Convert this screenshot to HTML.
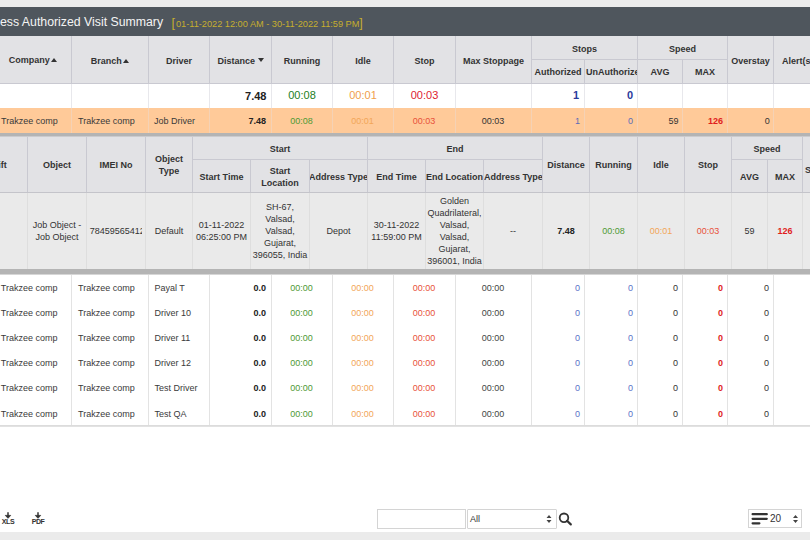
<!DOCTYPE html>
<html><head><meta charset="utf-8"><style>
html,body{margin:0;padding:0;}
body{width:810px;height:540px;overflow:hidden;position:relative;background:#fff;font-family:"Liberation Sans",sans-serif;}
body>div,body>svg{position:absolute;}
</style></head><body>
<div style="left:0px;top:0px;width:810px;height:7px;background:#ececec"></div>
<div style="left:0px;top:7px;width:810px;height:29px;background:#4f565d"></div>
<div style="left:0px;top:14.4px;font-size:12.3px;color:#f4f4f4;white-space:nowrap;line-height:16px">ess Authorized Visit Summary</div>
<div style="left:171.5px;top:15.3px;font-size:12.5px;color:#c6ae2e;white-space:nowrap;line-height:16px">[<span style="font-size:9.2px;vertical-align:0.6px;margin-left:1px">01-11-2022 12:00 AM - 30-11-2022 11:59 PM</span>]</div>
<div style="left:0px;top:36px;width:810px;height:47px;background:#e2e2e5"></div>
<div style="left:71px;top:36px;width:1px;height:47px;background:#c9c9d1"></div>
<div style="left:148px;top:36px;width:1px;height:47px;background:#c9c9d1"></div>
<div style="left:209px;top:36px;width:1px;height:47px;background:#c9c9d1"></div>
<div style="left:271px;top:36px;width:1px;height:47px;background:#c9c9d1"></div>
<div style="left:332px;top:36px;width:1px;height:47px;background:#c9c9d1"></div>
<div style="left:393px;top:36px;width:1px;height:47px;background:#c9c9d1"></div>
<div style="left:455px;top:36px;width:1px;height:47px;background:#c9c9d1"></div>
<div style="left:531px;top:36px;width:1px;height:47px;background:#c9c9d1"></div>
<div style="left:584px;top:59px;width:1px;height:24px;background:#c9c9d1"></div>
<div style="left:637px;top:36px;width:1px;height:47px;background:#c9c9d1"></div>
<div style="left:682px;top:59px;width:1px;height:24px;background:#c9c9d1"></div>
<div style="left:727px;top:36px;width:1px;height:47px;background:#c9c9d1"></div>
<div style="left:773px;top:36px;width:1px;height:47px;background:#c9c9d1"></div>
<div style="left:531px;top:59px;width:196px;height:1px;background:#c9c9d1"></div>
<div style="left:0px;top:83px;width:810px;height:1px;background:#c9c9d1"></div>
<div style="left:8.7px;top:36.8px;height:47px;display:flex;align-items:center;font-size:9px;font-weight:bold;color:#333">Company<span style="display:inline-block;width:0;height:0;border-left:3px solid transparent;border-right:3px solid transparent;border-bottom:4px solid #333;margin-left:1.5px;vertical-align:1px"></span></div>
<div style="left:72px;top:37px;width:76px;height:47px;display:flex;align-items:center;justify-content:center;text-align:center;font-size:9px;color:#333;overflow:hidden;font-weight:bold;box-sizing:border-box;white-space:nowrap;"><span>Branch<span style="display:inline-block;width:0;height:0;border-left:3px solid transparent;border-right:3px solid transparent;border-bottom:4px solid #333;margin-left:1.5px;vertical-align:1px"></span></span></div>
<div style="left:149px;top:37px;width:60px;height:47px;display:flex;align-items:center;justify-content:center;text-align:center;font-size:9px;color:#333;overflow:hidden;font-weight:bold;box-sizing:border-box;white-space:nowrap;"><span>Driver</span></div>
<div style="left:210px;top:37px;width:61px;height:47px;display:flex;align-items:center;justify-content:center;text-align:center;font-size:9px;color:#333;overflow:hidden;font-weight:bold;box-sizing:border-box;white-space:nowrap;"><span>Distance<span style="display:inline-block;width:0;height:0;border-left:3px solid transparent;border-right:3px solid transparent;border-top:4px solid #333;margin-left:2.5px;vertical-align:1.5px"></span></span></div>
<div style="left:272px;top:37px;width:60px;height:47px;display:flex;align-items:center;justify-content:center;text-align:center;font-size:9px;color:#333;overflow:hidden;font-weight:bold;box-sizing:border-box;white-space:nowrap;"><span>Running</span></div>
<div style="left:333px;top:37px;width:60px;height:47px;display:flex;align-items:center;justify-content:center;text-align:center;font-size:9px;color:#333;overflow:hidden;font-weight:bold;box-sizing:border-box;white-space:nowrap;"><span>Idle</span></div>
<div style="left:394px;top:37px;width:61px;height:47px;display:flex;align-items:center;justify-content:center;text-align:center;font-size:9px;color:#333;overflow:hidden;font-weight:bold;box-sizing:border-box;white-space:nowrap;"><span>Stop</span></div>
<div style="left:456px;top:37px;width:75px;height:47px;display:flex;align-items:center;justify-content:center;text-align:center;font-size:9px;color:#333;overflow:hidden;font-weight:bold;box-sizing:border-box;white-space:nowrap;"><span>Max Stoppage</span></div>
<div style="left:532px;top:37px;width:105px;height:23px;display:flex;align-items:center;justify-content:center;text-align:center;font-size:9px;color:#333;overflow:hidden;font-weight:bold;box-sizing:border-box;white-space:nowrap;"><span>Stops</span></div>
<div style="left:638px;top:37px;width:89px;height:23px;display:flex;align-items:center;justify-content:center;text-align:center;font-size:9px;color:#333;overflow:hidden;font-weight:bold;box-sizing:border-box;white-space:nowrap;"><span>Speed</span></div>
<div style="left:532px;top:60px;width:52px;height:24px;display:flex;align-items:center;justify-content:center;text-align:center;font-size:9px;color:#333;overflow:hidden;font-weight:bold;box-sizing:border-box;white-space:nowrap;"><span>Authorized</span></div>
<div style="left:585px;top:59.8px;width:52px;height:24.0px;display:flex;align-items:center;justify-content:flex-start;text-align:left;font-size:9px;color:#333;overflow:hidden;padding-left:1px;font-weight:bold;box-sizing:border-box;white-space:nowrap;"><span>UnAuthorize</span></div>
<div style="left:638px;top:60px;width:44px;height:24px;display:flex;align-items:center;justify-content:center;text-align:center;font-size:9px;color:#333;overflow:hidden;font-weight:bold;box-sizing:border-box;white-space:nowrap;"><span>AVG</span></div>
<div style="left:683px;top:60px;width:44px;height:24px;display:flex;align-items:center;justify-content:center;text-align:center;font-size:9px;color:#333;overflow:hidden;font-weight:bold;box-sizing:border-box;white-space:nowrap;"><span>MAX</span></div>
<div style="left:728px;top:37px;width:45px;height:47px;display:flex;align-items:center;justify-content:center;text-align:center;font-size:9px;color:#333;overflow:hidden;font-weight:bold;box-sizing:border-box;white-space:nowrap;"><span>Overstay</span></div>
<div style="left:774px;top:37px;width:36px;height:47px;display:flex;align-items:center;justify-content:flex-start;text-align:left;font-size:9px;color:#333;overflow:hidden;padding-left:8px;font-weight:bold;box-sizing:border-box;white-space:nowrap;"><span>Alert(s)</span></div>
<div style="left:0px;top:84px;width:810px;height:24px;background:#ffffff"></div>
<div style="left:71px;top:84px;width:1px;height:24px;background:#e8e8ec"></div>
<div style="left:148px;top:84px;width:1px;height:24px;background:#e8e8ec"></div>
<div style="left:209px;top:84px;width:1px;height:24px;background:#e8e8ec"></div>
<div style="left:271px;top:84px;width:1px;height:24px;background:#e8e8ec"></div>
<div style="left:332px;top:84px;width:1px;height:24px;background:#e8e8ec"></div>
<div style="left:393px;top:84px;width:1px;height:24px;background:#e8e8ec"></div>
<div style="left:455px;top:84px;width:1px;height:24px;background:#e8e8ec"></div>
<div style="left:531px;top:84px;width:1px;height:24px;background:#e8e8ec"></div>
<div style="left:584px;top:84px;width:1px;height:24px;background:#e8e8ec"></div>
<div style="left:637px;top:84px;width:1px;height:24px;background:#e8e8ec"></div>
<div style="left:682px;top:84px;width:1px;height:24px;background:#e8e8ec"></div>
<div style="left:727px;top:84px;width:1px;height:24px;background:#e8e8ec"></div>
<div style="left:773px;top:84px;width:1px;height:24px;background:#e8e8ec"></div>
<div style="left:209px;top:83.5px;width:62px;height:24.0px;display:flex;align-items:center;justify-content:flex-end;text-align:right;font-size:11px;color:#222;overflow:hidden;padding-right:4.5px;font-weight:bold;box-sizing:border-box;white-space:nowrap;"><span>7.48</span></div>
<div style="left:272px;top:83px;width:60px;height:24px;display:flex;align-items:center;justify-content:center;text-align:center;font-size:11px;color:#1c801c;overflow:hidden;box-sizing:border-box;white-space:nowrap;"><span>00:08</span></div>
<div style="left:333px;top:83px;width:60px;height:24px;display:flex;align-items:center;justify-content:center;text-align:center;font-size:11px;color:#f0a04b;overflow:hidden;box-sizing:border-box;white-space:nowrap;"><span>00:01</span></div>
<div style="left:394px;top:83px;width:61px;height:24px;display:flex;align-items:center;justify-content:center;text-align:center;font-size:11px;color:#dd1c30;overflow:hidden;box-sizing:border-box;white-space:nowrap;"><span>00:03</span></div>
<div style="left:531px;top:83px;width:53px;height:24px;display:flex;align-items:center;justify-content:flex-end;text-align:right;font-size:11px;color:#2b3a9c;overflow:hidden;padding-right:5px;font-weight:bold;box-sizing:border-box;white-space:nowrap;"><span>1</span></div>
<div style="left:584px;top:83px;width:53px;height:24px;display:flex;align-items:center;justify-content:flex-end;text-align:right;font-size:11px;color:#2b3a9c;overflow:hidden;padding-right:4px;font-weight:bold;box-sizing:border-box;white-space:nowrap;"><span>0</span></div>
<div style="left:0px;top:108px;width:810px;height:25px;background:#ffca99"></div>
<div style="left:71px;top:108px;width:1px;height:25px;background:#f5d2b5"></div>
<div style="left:148px;top:108px;width:1px;height:25px;background:#f5d2b5"></div>
<div style="left:209px;top:108px;width:1px;height:25px;background:#f5d2b5"></div>
<div style="left:271px;top:108px;width:1px;height:25px;background:#f5d2b5"></div>
<div style="left:332px;top:108px;width:1px;height:25px;background:#f5d2b5"></div>
<div style="left:393px;top:108px;width:1px;height:25px;background:#f5d2b5"></div>
<div style="left:455px;top:108px;width:1px;height:25px;background:#f5d2b5"></div>
<div style="left:531px;top:108px;width:1px;height:25px;background:#f5d2b5"></div>
<div style="left:584px;top:108px;width:1px;height:25px;background:#f5d2b5"></div>
<div style="left:637px;top:108px;width:1px;height:25px;background:#f5d2b5"></div>
<div style="left:682px;top:108px;width:1px;height:25px;background:#f5d2b5"></div>
<div style="left:727px;top:108px;width:1px;height:25px;background:#f5d2b5"></div>
<div style="left:773px;top:108px;width:1px;height:25px;background:#f5d2b5"></div>
<div style="left:-10px;top:108px;width:81px;height:25px;display:flex;align-items:center;justify-content:flex-start;text-align:left;font-size:9px;color:#3a3a3a;overflow:hidden;padding-left:11px;box-sizing:border-box;white-space:nowrap;"><span>Trakzee comp</span></div>
<div style="left:71px;top:108px;width:64.6px;height:25px;display:flex;align-items:center;justify-content:flex-start;text-align:left;font-size:9px;color:#3a3a3a;overflow:hidden;padding-left:7px;box-sizing:border-box;white-space:nowrap;"><span>Trakzee comp</span></div>
<div style="left:148px;top:108px;width:61px;height:25px;display:flex;align-items:center;justify-content:flex-start;text-align:left;font-size:9px;color:#3a3a3a;overflow:hidden;padding-left:6px;box-sizing:border-box;white-space:nowrap;"><span>Job Driver</span></div>
<div style="left:209px;top:108px;width:62px;height:25px;display:flex;align-items:center;justify-content:flex-end;text-align:right;font-size:9px;color:#222;overflow:hidden;padding-right:5px;font-weight:bold;box-sizing:border-box;white-space:nowrap;"><span>7.48</span></div>
<div style="left:271px;top:108px;width:61px;height:25px;display:flex;align-items:center;justify-content:center;text-align:center;font-size:9px;color:#4f9a35;overflow:hidden;box-sizing:border-box;white-space:nowrap;"><span>00:08</span></div>
<div style="left:332px;top:108px;width:61px;height:25px;display:flex;align-items:center;justify-content:center;text-align:center;font-size:9px;color:#f2a658;overflow:hidden;box-sizing:border-box;white-space:nowrap;"><span>00:01</span></div>
<div style="left:393px;top:108px;width:62px;height:25px;display:flex;align-items:center;justify-content:center;text-align:center;font-size:9px;color:#e8503a;overflow:hidden;box-sizing:border-box;white-space:nowrap;"><span>00:03</span></div>
<div style="left:455px;top:108px;width:76px;height:25px;display:flex;align-items:center;justify-content:center;text-align:center;font-size:9px;color:#333;overflow:hidden;box-sizing:border-box;white-space:nowrap;"><span>00:03</span></div>
<div style="left:531px;top:108px;width:53px;height:25px;display:flex;align-items:center;justify-content:flex-end;text-align:right;font-size:9px;color:#5a6ab8;overflow:hidden;padding-right:4px;box-sizing:border-box;white-space:nowrap;"><span>1</span></div>
<div style="left:584px;top:108px;width:53px;height:25px;display:flex;align-items:center;justify-content:flex-end;text-align:right;font-size:9px;color:#5a6ab8;overflow:hidden;padding-right:4px;box-sizing:border-box;white-space:nowrap;"><span>0</span></div>
<div style="left:637px;top:108px;width:45px;height:25px;display:flex;align-items:center;justify-content:flex-end;text-align:right;font-size:9px;color:#333;overflow:hidden;padding-right:3.5px;box-sizing:border-box;white-space:nowrap;"><span>59</span></div>
<div style="left:682px;top:108px;width:45px;height:25px;display:flex;align-items:center;justify-content:flex-end;text-align:right;font-size:9px;color:#e01e1e;overflow:hidden;padding-right:4px;font-weight:bold;box-sizing:border-box;white-space:nowrap;"><span>126</span></div>
<div style="left:727px;top:108px;width:46px;height:25px;display:flex;align-items:center;justify-content:flex-end;text-align:right;font-size:9px;color:#333;overflow:hidden;padding-right:3.3px;box-sizing:border-box;white-space:nowrap;"><span>0</span></div>
<div style="left:0px;top:133px;width:810px;height:3px;background:#b4b4b4"></div>
<div style="left:0px;top:136px;width:810px;height:1px;background:#cbcbce"></div>
<div style="left:0px;top:137px;width:810px;height:55px;background:#e2e2e5"></div>
<div style="left:27px;top:137px;width:1px;height:55px;background:#c9c9d1"></div>
<div style="left:86px;top:137px;width:1px;height:55px;background:#c9c9d1"></div>
<div style="left:145px;top:137px;width:1px;height:55px;background:#c9c9d1"></div>
<div style="left:192px;top:137px;width:1px;height:55px;background:#c9c9d1"></div>
<div style="left:250px;top:159px;width:1px;height:33px;background:#c9c9d1"></div>
<div style="left:309px;top:159px;width:1px;height:33px;background:#c9c9d1"></div>
<div style="left:367px;top:137px;width:1px;height:55px;background:#c9c9d1"></div>
<div style="left:425px;top:159px;width:1px;height:33px;background:#c9c9d1"></div>
<div style="left:483px;top:159px;width:1px;height:33px;background:#c9c9d1"></div>
<div style="left:542px;top:137px;width:1px;height:55px;background:#c9c9d1"></div>
<div style="left:589px;top:137px;width:1px;height:55px;background:#c9c9d1"></div>
<div style="left:637px;top:137px;width:1px;height:55px;background:#c9c9d1"></div>
<div style="left:684px;top:137px;width:1px;height:55px;background:#c9c9d1"></div>
<div style="left:731px;top:137px;width:1px;height:55px;background:#c9c9d1"></div>
<div style="left:767px;top:159px;width:1px;height:33px;background:#c9c9d1"></div>
<div style="left:802px;top:137px;width:1px;height:55px;background:#c9c9d1"></div>
<div style="left:192px;top:159px;width:350px;height:1px;background:#c9c9d1"></div>
<div style="left:731px;top:159px;width:71px;height:1px;background:#c9c9d1"></div>
<div style="left:0px;top:192px;width:810px;height:1px;background:#c4c4ca"></div>
<div style="left:-20px;top:137px;width:47px;height:55px;display:flex;align-items:center;justify-content:flex-end;text-align:right;font-size:9px;color:#333;overflow:hidden;padding-right:20.2px;font-weight:bold;box-sizing:border-box;white-space:nowrap;"><span>Shift</span></div>
<div style="left:28px;top:137.2px;width:58px;height:55.0px;display:flex;align-items:center;justify-content:center;text-align:center;font-size:9px;color:#333;overflow:hidden;font-weight:bold;line-height:12px;box-sizing:border-box;white-space:nowrap;"><span>Object</span></div>
<div style="left:87px;top:137.2px;width:58px;height:55.0px;display:flex;align-items:center;justify-content:center;text-align:center;font-size:9px;color:#333;overflow:hidden;font-weight:bold;line-height:12px;box-sizing:border-box;white-space:nowrap;"><span>IMEI No</span></div>
<div style="left:146px;top:137.2px;width:46px;height:55.0px;display:flex;align-items:center;justify-content:center;text-align:center;font-size:9px;color:#333;overflow:hidden;font-weight:bold;line-height:12px;box-sizing:border-box;white-space:nowrap;white-space:normal;"><span>Object<br>Type</span></div>
<div style="left:193px;top:137.2px;width:174px;height:23.0px;display:flex;align-items:center;justify-content:center;text-align:center;font-size:9px;color:#333;overflow:hidden;font-weight:bold;line-height:12px;box-sizing:border-box;white-space:nowrap;"><span>Start</span></div>
<div style="left:368px;top:137.2px;width:174px;height:23.0px;display:flex;align-items:center;justify-content:center;text-align:center;font-size:9px;color:#333;overflow:hidden;font-weight:bold;line-height:12px;box-sizing:border-box;white-space:nowrap;"><span>End</span></div>
<div style="left:193px;top:160.8px;width:57px;height:32.0px;display:flex;align-items:center;justify-content:center;text-align:center;font-size:9px;color:#333;overflow:hidden;font-weight:bold;line-height:12px;box-sizing:border-box;white-space:nowrap;"><span>Start Time</span></div>
<div style="left:251px;top:160.8px;width:58px;height:32.0px;display:flex;align-items:center;justify-content:center;text-align:center;font-size:9px;color:#333;overflow:hidden;font-weight:bold;line-height:12px;box-sizing:border-box;white-space:nowrap;"><span>Start<br>Location</span></div>
<div style="left:310px;top:160.8px;width:57px;height:32.0px;display:flex;align-items:center;justify-content:center;text-align:center;font-size:9px;color:#333;overflow:hidden;font-weight:bold;line-height:12px;box-sizing:border-box;white-space:nowrap;"><span>Address Type</span></div>
<div style="left:368px;top:160.8px;width:57px;height:32.0px;display:flex;align-items:center;justify-content:center;text-align:center;font-size:9px;color:#333;overflow:hidden;font-weight:bold;line-height:12px;box-sizing:border-box;white-space:nowrap;"><span>End Time</span></div>
<div style="left:426px;top:160.8px;width:57px;height:32.0px;display:flex;align-items:center;justify-content:center;text-align:center;font-size:9px;color:#333;overflow:hidden;font-weight:bold;line-height:12px;box-sizing:border-box;white-space:nowrap;"><span>End Location</span></div>
<div style="left:484px;top:160.8px;width:58px;height:32.0px;display:flex;align-items:center;justify-content:flex-start;text-align:left;font-size:9px;color:#333;overflow:hidden;padding-left:0px;font-weight:bold;box-sizing:border-box;white-space:nowrap;"><span>Address Type</span></div>
<div style="left:543px;top:137.2px;width:46px;height:55.0px;display:flex;align-items:center;justify-content:center;text-align:center;font-size:9px;color:#333;overflow:hidden;font-weight:bold;line-height:12px;box-sizing:border-box;white-space:nowrap;"><span>Distance</span></div>
<div style="left:590px;top:137.2px;width:47px;height:55.0px;display:flex;align-items:center;justify-content:center;text-align:center;font-size:9px;color:#333;overflow:hidden;font-weight:bold;line-height:12px;box-sizing:border-box;white-space:nowrap;"><span>Running</span></div>
<div style="left:638px;top:137.2px;width:46px;height:55.0px;display:flex;align-items:center;justify-content:center;text-align:center;font-size:9px;color:#333;overflow:hidden;font-weight:bold;line-height:12px;box-sizing:border-box;white-space:nowrap;"><span>Idle</span></div>
<div style="left:685px;top:137.2px;width:46px;height:55.0px;display:flex;align-items:center;justify-content:center;text-align:center;font-size:9px;color:#333;overflow:hidden;font-weight:bold;line-height:12px;box-sizing:border-box;white-space:nowrap;"><span>Stop</span></div>
<div style="left:732px;top:137.2px;width:70px;height:23.0px;display:flex;align-items:center;justify-content:center;text-align:center;font-size:9px;color:#333;overflow:hidden;font-weight:bold;line-height:12px;box-sizing:border-box;white-space:nowrap;"><span>Speed</span></div>
<div style="left:732px;top:160.8px;width:35px;height:32.0px;display:flex;align-items:center;justify-content:center;text-align:center;font-size:9px;color:#333;overflow:hidden;font-weight:bold;line-height:12px;box-sizing:border-box;white-space:nowrap;"><span>AVG</span></div>
<div style="left:768px;top:160.8px;width:34px;height:32.0px;display:flex;align-items:center;justify-content:center;text-align:center;font-size:9px;color:#333;overflow:hidden;font-weight:bold;line-height:12px;box-sizing:border-box;white-space:nowrap;"><span>MAX</span></div>
<div style="left:803px;top:161px;width:7px;height:18px;display:flex;align-items:center;justify-content:flex-start;text-align:left;font-size:9px;color:#333;overflow:hidden;padding-left:2px;font-weight:bold;box-sizing:border-box;white-space:nowrap;"><span>S</span></div>
<div style="left:0px;top:193px;width:810px;height:76px;background:#eaeaea"></div>
<div style="left:27px;top:193px;width:1px;height:76px;background:#dedede"></div>
<div style="left:86px;top:193px;width:1px;height:76px;background:#dedede"></div>
<div style="left:145px;top:193px;width:1px;height:76px;background:#dedede"></div>
<div style="left:192px;top:193px;width:1px;height:76px;background:#dedede"></div>
<div style="left:250px;top:193px;width:1px;height:76px;background:#dedede"></div>
<div style="left:309px;top:193px;width:1px;height:76px;background:#dedede"></div>
<div style="left:367px;top:193px;width:1px;height:76px;background:#dedede"></div>
<div style="left:425px;top:193px;width:1px;height:76px;background:#dedede"></div>
<div style="left:483px;top:193px;width:1px;height:76px;background:#dedede"></div>
<div style="left:542px;top:193px;width:1px;height:76px;background:#dedede"></div>
<div style="left:589px;top:193px;width:1px;height:76px;background:#dedede"></div>
<div style="left:637px;top:193px;width:1px;height:76px;background:#dedede"></div>
<div style="left:684px;top:193px;width:1px;height:76px;background:#dedede"></div>
<div style="left:731px;top:193px;width:1px;height:76px;background:#dedede"></div>
<div style="left:767px;top:193px;width:1px;height:76px;background:#dedede"></div>
<div style="left:802px;top:193px;width:1px;height:76px;background:#dedede"></div>
<div style="left:28px;top:192px;width:58px;height:77px;display:flex;align-items:center;justify-content:center;text-align:center;font-size:9px;color:#333;overflow:hidden;line-height:12px;box-sizing:border-box;white-space:nowrap;"><span>Job Object -<br>Job Object</span></div>
<div style="left:87px;top:192px;width:55.19999999999999px;height:77px;display:flex;align-items:center;justify-content:flex-start;text-align:left;font-size:9px;color:#333;overflow:hidden;padding-left:2.7px;box-sizing:border-box;white-space:nowrap;"><span>784595654123</span></div>
<div style="left:146px;top:192px;width:46px;height:77px;display:flex;align-items:center;justify-content:center;text-align:center;font-size:9px;color:#333;overflow:hidden;line-height:12px;box-sizing:border-box;white-space:nowrap;"><span>Default</span></div>
<div style="left:193px;top:192px;width:57px;height:77px;display:flex;align-items:center;justify-content:center;text-align:center;font-size:9px;color:#333;overflow:hidden;line-height:12px;box-sizing:border-box;white-space:nowrap;"><span>01-11-2022<br>06:25:00 PM</span></div>
<div style="left:251px;top:192px;width:58px;height:77px;display:flex;align-items:center;justify-content:center;text-align:center;font-size:9px;color:#333;overflow:hidden;line-height:12px;box-sizing:border-box;white-space:nowrap;"><span>SH-67,<br>Valsad,<br>Valsad,<br>Gujarat,<br>396055, India</span></div>
<div style="left:310px;top:192px;width:57px;height:77px;display:flex;align-items:center;justify-content:center;text-align:center;font-size:9px;color:#333;overflow:hidden;line-height:12px;box-sizing:border-box;white-space:nowrap;"><span>Depot</span></div>
<div style="left:368px;top:192px;width:57px;height:77px;display:flex;align-items:center;justify-content:center;text-align:center;font-size:9px;color:#333;overflow:hidden;line-height:12px;box-sizing:border-box;white-space:nowrap;"><span>30-11-2022<br>11:59:00 PM</span></div>
<div style="left:426px;top:192px;width:57px;height:77px;display:flex;align-items:center;justify-content:center;text-align:center;font-size:9px;color:#333;overflow:hidden;line-height:12px;box-sizing:border-box;white-space:nowrap;"><span>Golden<br>Quadrilateral,<br>Valsad,<br>Valsad,<br>Gujarat,<br>396001, India</span></div>
<div style="left:484px;top:192px;width:58px;height:77px;display:flex;align-items:center;justify-content:center;text-align:center;font-size:9px;color:#333;overflow:hidden;line-height:12px;box-sizing:border-box;white-space:nowrap;"><span>--</span></div>
<div style="left:543px;top:192px;width:46px;height:77px;display:flex;align-items:center;justify-content:center;text-align:center;font-size:9px;color:#222;overflow:hidden;font-weight:bold;line-height:12px;box-sizing:border-box;white-space:nowrap;"><span>7.48</span></div>
<div style="left:590px;top:192px;width:47px;height:77px;display:flex;align-items:center;justify-content:center;text-align:center;font-size:9px;color:#4f9a35;overflow:hidden;line-height:12px;box-sizing:border-box;white-space:nowrap;"><span>00:08</span></div>
<div style="left:638px;top:192px;width:46px;height:77px;display:flex;align-items:center;justify-content:center;text-align:center;font-size:9px;color:#f2a658;overflow:hidden;line-height:12px;box-sizing:border-box;white-space:nowrap;"><span>00:01</span></div>
<div style="left:685px;top:192px;width:46px;height:77px;display:flex;align-items:center;justify-content:center;text-align:center;font-size:9px;color:#e8503a;overflow:hidden;line-height:12px;box-sizing:border-box;white-space:nowrap;"><span>00:03</span></div>
<div style="left:732px;top:192px;width:35px;height:77px;display:flex;align-items:center;justify-content:center;text-align:center;font-size:9px;color:#333;overflow:hidden;line-height:12px;box-sizing:border-box;white-space:nowrap;"><span>59</span></div>
<div style="left:768px;top:192px;width:34px;height:77px;display:flex;align-items:center;justify-content:center;text-align:center;font-size:9px;color:#e01e1e;overflow:hidden;font-weight:bold;line-height:12px;box-sizing:border-box;white-space:nowrap;"><span>126</span></div>
<div style="left:0px;top:269px;width:810px;height:5px;background:#b4b4b4"></div>
<div style="left:0px;top:274px;width:810px;height:152px;background:#ffffff"></div>
<div style="left:0px;top:274px;width:810px;height:1px;background:#d6d6d6"></div>
<div style="left:71px;top:275px;width:1px;height:150px;background:#e3e3e3"></div>
<div style="left:148px;top:275px;width:1px;height:150px;background:#e3e3e3"></div>
<div style="left:209px;top:275px;width:1px;height:150px;background:#e3e3e3"></div>
<div style="left:271px;top:275px;width:1px;height:150px;background:#e3e3e3"></div>
<div style="left:332px;top:275px;width:1px;height:150px;background:#e3e3e3"></div>
<div style="left:393px;top:275px;width:1px;height:150px;background:#e3e3e3"></div>
<div style="left:455px;top:275px;width:1px;height:150px;background:#e3e3e3"></div>
<div style="left:531px;top:275px;width:1px;height:150px;background:#e3e3e3"></div>
<div style="left:584px;top:275px;width:1px;height:150px;background:#e3e3e3"></div>
<div style="left:637px;top:275px;width:1px;height:150px;background:#e3e3e3"></div>
<div style="left:682px;top:275px;width:1px;height:150px;background:#e3e3e3"></div>
<div style="left:727px;top:275px;width:1px;height:150px;background:#e3e3e3"></div>
<div style="left:773px;top:275px;width:1px;height:150px;background:#e3e3e3"></div>
<div style="left:0px;top:425px;width:810px;height:1px;background:#dcdcdc"></div>
<div style="left:0px;top:426px;width:810px;height:1px;background:#e2e2e2"></div>
<div style="left:-10px;top:275.1px;width:81px;height:25.19999999999999px;display:flex;align-items:center;justify-content:flex-start;text-align:left;font-size:9px;color:#3a3a3a;overflow:hidden;padding-left:10.8px;box-sizing:border-box;white-space:nowrap;"><span>Trakzee comp</span></div>
<div style="left:71px;top:275.1px;width:64.6px;height:25.19999999999999px;display:flex;align-items:center;justify-content:flex-start;text-align:left;font-size:9px;color:#3a3a3a;overflow:hidden;padding-left:7px;box-sizing:border-box;white-space:nowrap;"><span>Trakzee comp</span></div>
<div style="left:148px;top:275.1px;width:49.5px;height:25.19999999999999px;display:flex;align-items:center;justify-content:flex-start;text-align:left;font-size:9px;color:#3a3a3a;overflow:hidden;padding-left:6.5px;box-sizing:border-box;white-space:nowrap;"><span>Payal T</span></div>
<div style="left:209px;top:275.1px;width:62px;height:25.19999999999999px;display:flex;align-items:center;justify-content:flex-end;text-align:right;font-size:9px;color:#222;overflow:hidden;padding-right:5px;font-weight:bold;box-sizing:border-box;white-space:nowrap;"><span>0.0</span></div>
<div style="left:271px;top:275.1px;width:61px;height:25.19999999999999px;display:flex;align-items:center;justify-content:center;text-align:center;font-size:9px;color:#4f9a35;overflow:hidden;box-sizing:border-box;white-space:nowrap;"><span>00:00</span></div>
<div style="left:332px;top:275.1px;width:61px;height:25.19999999999999px;display:flex;align-items:center;justify-content:center;text-align:center;font-size:9px;color:#f2a658;overflow:hidden;box-sizing:border-box;white-space:nowrap;"><span>00:00</span></div>
<div style="left:393px;top:275.1px;width:62px;height:25.19999999999999px;display:flex;align-items:center;justify-content:center;text-align:center;font-size:9px;color:#e8503a;overflow:hidden;box-sizing:border-box;white-space:nowrap;"><span>00:00</span></div>
<div style="left:455px;top:275.1px;width:76px;height:25.19999999999999px;display:flex;align-items:center;justify-content:center;text-align:center;font-size:9px;color:#444;overflow:hidden;box-sizing:border-box;white-space:nowrap;"><span>00:00</span></div>
<div style="left:531px;top:275.1px;width:53px;height:25.19999999999999px;display:flex;align-items:center;justify-content:flex-end;text-align:right;font-size:9px;color:#5a72c8;overflow:hidden;padding-right:4px;box-sizing:border-box;white-space:nowrap;"><span>0</span></div>
<div style="left:584px;top:275.1px;width:53px;height:25.19999999999999px;display:flex;align-items:center;justify-content:flex-end;text-align:right;font-size:9px;color:#5a72c8;overflow:hidden;padding-right:4px;box-sizing:border-box;white-space:nowrap;"><span>0</span></div>
<div style="left:637px;top:275.1px;width:45px;height:25.19999999999999px;display:flex;align-items:center;justify-content:flex-end;text-align:right;font-size:9px;color:#333;overflow:hidden;padding-right:4px;box-sizing:border-box;white-space:nowrap;"><span>0</span></div>
<div style="left:682px;top:275.1px;width:45px;height:25.19999999999999px;display:flex;align-items:center;justify-content:flex-end;text-align:right;font-size:9px;color:#e01e1e;overflow:hidden;padding-right:4px;font-weight:bold;box-sizing:border-box;white-space:nowrap;"><span>0</span></div>
<div style="left:727px;top:275.1px;width:46px;height:25.19999999999999px;display:flex;align-items:center;justify-content:flex-end;text-align:right;font-size:9px;color:#333;overflow:hidden;padding-right:4px;box-sizing:border-box;white-space:nowrap;"><span>0</span></div>
<div style="left:-10px;top:300.3px;width:81px;height:25.19999999999999px;display:flex;align-items:center;justify-content:flex-start;text-align:left;font-size:9px;color:#3a3a3a;overflow:hidden;padding-left:10.8px;box-sizing:border-box;white-space:nowrap;"><span>Trakzee comp</span></div>
<div style="left:71px;top:300.3px;width:64.6px;height:25.19999999999999px;display:flex;align-items:center;justify-content:flex-start;text-align:left;font-size:9px;color:#3a3a3a;overflow:hidden;padding-left:7px;box-sizing:border-box;white-space:nowrap;"><span>Trakzee comp</span></div>
<div style="left:148px;top:300.3px;width:49.5px;height:25.19999999999999px;display:flex;align-items:center;justify-content:flex-start;text-align:left;font-size:9px;color:#3a3a3a;overflow:hidden;padding-left:6.5px;box-sizing:border-box;white-space:nowrap;"><span>Driver 10</span></div>
<div style="left:209px;top:300.3px;width:62px;height:25.19999999999999px;display:flex;align-items:center;justify-content:flex-end;text-align:right;font-size:9px;color:#222;overflow:hidden;padding-right:5px;font-weight:bold;box-sizing:border-box;white-space:nowrap;"><span>0.0</span></div>
<div style="left:271px;top:300.3px;width:61px;height:25.19999999999999px;display:flex;align-items:center;justify-content:center;text-align:center;font-size:9px;color:#4f9a35;overflow:hidden;box-sizing:border-box;white-space:nowrap;"><span>00:00</span></div>
<div style="left:332px;top:300.3px;width:61px;height:25.19999999999999px;display:flex;align-items:center;justify-content:center;text-align:center;font-size:9px;color:#f2a658;overflow:hidden;box-sizing:border-box;white-space:nowrap;"><span>00:00</span></div>
<div style="left:393px;top:300.3px;width:62px;height:25.19999999999999px;display:flex;align-items:center;justify-content:center;text-align:center;font-size:9px;color:#e8503a;overflow:hidden;box-sizing:border-box;white-space:nowrap;"><span>00:00</span></div>
<div style="left:455px;top:300.3px;width:76px;height:25.19999999999999px;display:flex;align-items:center;justify-content:center;text-align:center;font-size:9px;color:#444;overflow:hidden;box-sizing:border-box;white-space:nowrap;"><span>00:00</span></div>
<div style="left:531px;top:300.3px;width:53px;height:25.19999999999999px;display:flex;align-items:center;justify-content:flex-end;text-align:right;font-size:9px;color:#5a72c8;overflow:hidden;padding-right:4px;box-sizing:border-box;white-space:nowrap;"><span>0</span></div>
<div style="left:584px;top:300.3px;width:53px;height:25.19999999999999px;display:flex;align-items:center;justify-content:flex-end;text-align:right;font-size:9px;color:#5a72c8;overflow:hidden;padding-right:4px;box-sizing:border-box;white-space:nowrap;"><span>0</span></div>
<div style="left:637px;top:300.3px;width:45px;height:25.19999999999999px;display:flex;align-items:center;justify-content:flex-end;text-align:right;font-size:9px;color:#333;overflow:hidden;padding-right:4px;box-sizing:border-box;white-space:nowrap;"><span>0</span></div>
<div style="left:682px;top:300.3px;width:45px;height:25.19999999999999px;display:flex;align-items:center;justify-content:flex-end;text-align:right;font-size:9px;color:#e01e1e;overflow:hidden;padding-right:4px;font-weight:bold;box-sizing:border-box;white-space:nowrap;"><span>0</span></div>
<div style="left:727px;top:300.3px;width:46px;height:25.19999999999999px;display:flex;align-items:center;justify-content:flex-end;text-align:right;font-size:9px;color:#333;overflow:hidden;padding-right:4px;box-sizing:border-box;white-space:nowrap;"><span>0</span></div>
<div style="left:-10px;top:325.5px;width:81px;height:25.19999999999999px;display:flex;align-items:center;justify-content:flex-start;text-align:left;font-size:9px;color:#3a3a3a;overflow:hidden;padding-left:10.8px;box-sizing:border-box;white-space:nowrap;"><span>Trakzee comp</span></div>
<div style="left:71px;top:325.5px;width:64.6px;height:25.19999999999999px;display:flex;align-items:center;justify-content:flex-start;text-align:left;font-size:9px;color:#3a3a3a;overflow:hidden;padding-left:7px;box-sizing:border-box;white-space:nowrap;"><span>Trakzee comp</span></div>
<div style="left:148px;top:325.5px;width:49.5px;height:25.19999999999999px;display:flex;align-items:center;justify-content:flex-start;text-align:left;font-size:9px;color:#3a3a3a;overflow:hidden;padding-left:6.5px;box-sizing:border-box;white-space:nowrap;"><span>Driver 11</span></div>
<div style="left:209px;top:325.5px;width:62px;height:25.19999999999999px;display:flex;align-items:center;justify-content:flex-end;text-align:right;font-size:9px;color:#222;overflow:hidden;padding-right:5px;font-weight:bold;box-sizing:border-box;white-space:nowrap;"><span>0.0</span></div>
<div style="left:271px;top:325.5px;width:61px;height:25.19999999999999px;display:flex;align-items:center;justify-content:center;text-align:center;font-size:9px;color:#4f9a35;overflow:hidden;box-sizing:border-box;white-space:nowrap;"><span>00:00</span></div>
<div style="left:332px;top:325.5px;width:61px;height:25.19999999999999px;display:flex;align-items:center;justify-content:center;text-align:center;font-size:9px;color:#f2a658;overflow:hidden;box-sizing:border-box;white-space:nowrap;"><span>00:00</span></div>
<div style="left:393px;top:325.5px;width:62px;height:25.19999999999999px;display:flex;align-items:center;justify-content:center;text-align:center;font-size:9px;color:#e8503a;overflow:hidden;box-sizing:border-box;white-space:nowrap;"><span>00:00</span></div>
<div style="left:455px;top:325.5px;width:76px;height:25.19999999999999px;display:flex;align-items:center;justify-content:center;text-align:center;font-size:9px;color:#444;overflow:hidden;box-sizing:border-box;white-space:nowrap;"><span>00:00</span></div>
<div style="left:531px;top:325.5px;width:53px;height:25.19999999999999px;display:flex;align-items:center;justify-content:flex-end;text-align:right;font-size:9px;color:#5a72c8;overflow:hidden;padding-right:4px;box-sizing:border-box;white-space:nowrap;"><span>0</span></div>
<div style="left:584px;top:325.5px;width:53px;height:25.19999999999999px;display:flex;align-items:center;justify-content:flex-end;text-align:right;font-size:9px;color:#5a72c8;overflow:hidden;padding-right:4px;box-sizing:border-box;white-space:nowrap;"><span>0</span></div>
<div style="left:637px;top:325.5px;width:45px;height:25.19999999999999px;display:flex;align-items:center;justify-content:flex-end;text-align:right;font-size:9px;color:#333;overflow:hidden;padding-right:4px;box-sizing:border-box;white-space:nowrap;"><span>0</span></div>
<div style="left:682px;top:325.5px;width:45px;height:25.19999999999999px;display:flex;align-items:center;justify-content:flex-end;text-align:right;font-size:9px;color:#e01e1e;overflow:hidden;padding-right:4px;font-weight:bold;box-sizing:border-box;white-space:nowrap;"><span>0</span></div>
<div style="left:727px;top:325.5px;width:46px;height:25.19999999999999px;display:flex;align-items:center;justify-content:flex-end;text-align:right;font-size:9px;color:#333;overflow:hidden;padding-right:4px;box-sizing:border-box;white-space:nowrap;"><span>0</span></div>
<div style="left:-10px;top:350.70000000000005px;width:81px;height:25.19999999999999px;display:flex;align-items:center;justify-content:flex-start;text-align:left;font-size:9px;color:#3a3a3a;overflow:hidden;padding-left:10.8px;box-sizing:border-box;white-space:nowrap;"><span>Trakzee comp</span></div>
<div style="left:71px;top:350.70000000000005px;width:64.6px;height:25.19999999999999px;display:flex;align-items:center;justify-content:flex-start;text-align:left;font-size:9px;color:#3a3a3a;overflow:hidden;padding-left:7px;box-sizing:border-box;white-space:nowrap;"><span>Trakzee comp</span></div>
<div style="left:148px;top:350.70000000000005px;width:49.5px;height:25.19999999999999px;display:flex;align-items:center;justify-content:flex-start;text-align:left;font-size:9px;color:#3a3a3a;overflow:hidden;padding-left:6.5px;box-sizing:border-box;white-space:nowrap;"><span>Driver 12</span></div>
<div style="left:209px;top:350.70000000000005px;width:62px;height:25.19999999999999px;display:flex;align-items:center;justify-content:flex-end;text-align:right;font-size:9px;color:#222;overflow:hidden;padding-right:5px;font-weight:bold;box-sizing:border-box;white-space:nowrap;"><span>0.0</span></div>
<div style="left:271px;top:350.70000000000005px;width:61px;height:25.19999999999999px;display:flex;align-items:center;justify-content:center;text-align:center;font-size:9px;color:#4f9a35;overflow:hidden;box-sizing:border-box;white-space:nowrap;"><span>00:00</span></div>
<div style="left:332px;top:350.70000000000005px;width:61px;height:25.19999999999999px;display:flex;align-items:center;justify-content:center;text-align:center;font-size:9px;color:#f2a658;overflow:hidden;box-sizing:border-box;white-space:nowrap;"><span>00:00</span></div>
<div style="left:393px;top:350.70000000000005px;width:62px;height:25.19999999999999px;display:flex;align-items:center;justify-content:center;text-align:center;font-size:9px;color:#e8503a;overflow:hidden;box-sizing:border-box;white-space:nowrap;"><span>00:00</span></div>
<div style="left:455px;top:350.70000000000005px;width:76px;height:25.19999999999999px;display:flex;align-items:center;justify-content:center;text-align:center;font-size:9px;color:#444;overflow:hidden;box-sizing:border-box;white-space:nowrap;"><span>00:00</span></div>
<div style="left:531px;top:350.70000000000005px;width:53px;height:25.19999999999999px;display:flex;align-items:center;justify-content:flex-end;text-align:right;font-size:9px;color:#5a72c8;overflow:hidden;padding-right:4px;box-sizing:border-box;white-space:nowrap;"><span>0</span></div>
<div style="left:584px;top:350.70000000000005px;width:53px;height:25.19999999999999px;display:flex;align-items:center;justify-content:flex-end;text-align:right;font-size:9px;color:#5a72c8;overflow:hidden;padding-right:4px;box-sizing:border-box;white-space:nowrap;"><span>0</span></div>
<div style="left:637px;top:350.70000000000005px;width:45px;height:25.19999999999999px;display:flex;align-items:center;justify-content:flex-end;text-align:right;font-size:9px;color:#333;overflow:hidden;padding-right:4px;box-sizing:border-box;white-space:nowrap;"><span>0</span></div>
<div style="left:682px;top:350.70000000000005px;width:45px;height:25.19999999999999px;display:flex;align-items:center;justify-content:flex-end;text-align:right;font-size:9px;color:#e01e1e;overflow:hidden;padding-right:4px;font-weight:bold;box-sizing:border-box;white-space:nowrap;"><span>0</span></div>
<div style="left:727px;top:350.70000000000005px;width:46px;height:25.19999999999999px;display:flex;align-items:center;justify-content:flex-end;text-align:right;font-size:9px;color:#333;overflow:hidden;padding-right:4px;box-sizing:border-box;white-space:nowrap;"><span>0</span></div>
<div style="left:-10px;top:375.90000000000003px;width:81px;height:25.19999999999999px;display:flex;align-items:center;justify-content:flex-start;text-align:left;font-size:9px;color:#3a3a3a;overflow:hidden;padding-left:10.8px;box-sizing:border-box;white-space:nowrap;"><span>Trakzee comp</span></div>
<div style="left:71px;top:375.90000000000003px;width:64.6px;height:25.19999999999999px;display:flex;align-items:center;justify-content:flex-start;text-align:left;font-size:9px;color:#3a3a3a;overflow:hidden;padding-left:7px;box-sizing:border-box;white-space:nowrap;"><span>Trakzee comp</span></div>
<div style="left:148px;top:375.90000000000003px;width:49.5px;height:25.19999999999999px;display:flex;align-items:center;justify-content:flex-start;text-align:left;font-size:9px;color:#3a3a3a;overflow:hidden;padding-left:6.5px;box-sizing:border-box;white-space:nowrap;"><span>Test Driver</span></div>
<div style="left:209px;top:375.90000000000003px;width:62px;height:25.19999999999999px;display:flex;align-items:center;justify-content:flex-end;text-align:right;font-size:9px;color:#222;overflow:hidden;padding-right:5px;font-weight:bold;box-sizing:border-box;white-space:nowrap;"><span>0.0</span></div>
<div style="left:271px;top:375.90000000000003px;width:61px;height:25.19999999999999px;display:flex;align-items:center;justify-content:center;text-align:center;font-size:9px;color:#4f9a35;overflow:hidden;box-sizing:border-box;white-space:nowrap;"><span>00:00</span></div>
<div style="left:332px;top:375.90000000000003px;width:61px;height:25.19999999999999px;display:flex;align-items:center;justify-content:center;text-align:center;font-size:9px;color:#f2a658;overflow:hidden;box-sizing:border-box;white-space:nowrap;"><span>00:00</span></div>
<div style="left:393px;top:375.90000000000003px;width:62px;height:25.19999999999999px;display:flex;align-items:center;justify-content:center;text-align:center;font-size:9px;color:#e8503a;overflow:hidden;box-sizing:border-box;white-space:nowrap;"><span>00:00</span></div>
<div style="left:455px;top:375.90000000000003px;width:76px;height:25.19999999999999px;display:flex;align-items:center;justify-content:center;text-align:center;font-size:9px;color:#444;overflow:hidden;box-sizing:border-box;white-space:nowrap;"><span>00:00</span></div>
<div style="left:531px;top:375.90000000000003px;width:53px;height:25.19999999999999px;display:flex;align-items:center;justify-content:flex-end;text-align:right;font-size:9px;color:#5a72c8;overflow:hidden;padding-right:4px;box-sizing:border-box;white-space:nowrap;"><span>0</span></div>
<div style="left:584px;top:375.90000000000003px;width:53px;height:25.19999999999999px;display:flex;align-items:center;justify-content:flex-end;text-align:right;font-size:9px;color:#5a72c8;overflow:hidden;padding-right:4px;box-sizing:border-box;white-space:nowrap;"><span>0</span></div>
<div style="left:637px;top:375.90000000000003px;width:45px;height:25.19999999999999px;display:flex;align-items:center;justify-content:flex-end;text-align:right;font-size:9px;color:#333;overflow:hidden;padding-right:4px;box-sizing:border-box;white-space:nowrap;"><span>0</span></div>
<div style="left:682px;top:375.90000000000003px;width:45px;height:25.19999999999999px;display:flex;align-items:center;justify-content:flex-end;text-align:right;font-size:9px;color:#e01e1e;overflow:hidden;padding-right:4px;font-weight:bold;box-sizing:border-box;white-space:nowrap;"><span>0</span></div>
<div style="left:727px;top:375.90000000000003px;width:46px;height:25.19999999999999px;display:flex;align-items:center;justify-content:flex-end;text-align:right;font-size:9px;color:#333;overflow:hidden;padding-right:4px;box-sizing:border-box;white-space:nowrap;"><span>0</span></div>
<div style="left:-10px;top:401.1px;width:81px;height:25.19999999999999px;display:flex;align-items:center;justify-content:flex-start;text-align:left;font-size:9px;color:#3a3a3a;overflow:hidden;padding-left:10.8px;box-sizing:border-box;white-space:nowrap;"><span>Trakzee comp</span></div>
<div style="left:71px;top:401.1px;width:64.6px;height:25.19999999999999px;display:flex;align-items:center;justify-content:flex-start;text-align:left;font-size:9px;color:#3a3a3a;overflow:hidden;padding-left:7px;box-sizing:border-box;white-space:nowrap;"><span>Trakzee comp</span></div>
<div style="left:148px;top:401.1px;width:49.5px;height:25.19999999999999px;display:flex;align-items:center;justify-content:flex-start;text-align:left;font-size:9px;color:#3a3a3a;overflow:hidden;padding-left:6.5px;box-sizing:border-box;white-space:nowrap;"><span>Test QA</span></div>
<div style="left:209px;top:401.1px;width:62px;height:25.19999999999999px;display:flex;align-items:center;justify-content:flex-end;text-align:right;font-size:9px;color:#222;overflow:hidden;padding-right:5px;font-weight:bold;box-sizing:border-box;white-space:nowrap;"><span>0.0</span></div>
<div style="left:271px;top:401.1px;width:61px;height:25.19999999999999px;display:flex;align-items:center;justify-content:center;text-align:center;font-size:9px;color:#4f9a35;overflow:hidden;box-sizing:border-box;white-space:nowrap;"><span>00:00</span></div>
<div style="left:332px;top:401.1px;width:61px;height:25.19999999999999px;display:flex;align-items:center;justify-content:center;text-align:center;font-size:9px;color:#f2a658;overflow:hidden;box-sizing:border-box;white-space:nowrap;"><span>00:00</span></div>
<div style="left:393px;top:401.1px;width:62px;height:25.19999999999999px;display:flex;align-items:center;justify-content:center;text-align:center;font-size:9px;color:#e8503a;overflow:hidden;box-sizing:border-box;white-space:nowrap;"><span>00:00</span></div>
<div style="left:455px;top:401.1px;width:76px;height:25.19999999999999px;display:flex;align-items:center;justify-content:center;text-align:center;font-size:9px;color:#444;overflow:hidden;box-sizing:border-box;white-space:nowrap;"><span>00:00</span></div>
<div style="left:531px;top:401.1px;width:53px;height:25.19999999999999px;display:flex;align-items:center;justify-content:flex-end;text-align:right;font-size:9px;color:#5a72c8;overflow:hidden;padding-right:4px;box-sizing:border-box;white-space:nowrap;"><span>0</span></div>
<div style="left:584px;top:401.1px;width:53px;height:25.19999999999999px;display:flex;align-items:center;justify-content:flex-end;text-align:right;font-size:9px;color:#5a72c8;overflow:hidden;padding-right:4px;box-sizing:border-box;white-space:nowrap;"><span>0</span></div>
<div style="left:637px;top:401.1px;width:45px;height:25.19999999999999px;display:flex;align-items:center;justify-content:flex-end;text-align:right;font-size:9px;color:#333;overflow:hidden;padding-right:4px;box-sizing:border-box;white-space:nowrap;"><span>0</span></div>
<div style="left:682px;top:401.1px;width:45px;height:25.19999999999999px;display:flex;align-items:center;justify-content:flex-end;text-align:right;font-size:9px;color:#e01e1e;overflow:hidden;padding-right:4px;font-weight:bold;box-sizing:border-box;white-space:nowrap;"><span>0</span></div>
<div style="left:727px;top:401.1px;width:46px;height:25.19999999999999px;display:flex;align-items:center;justify-content:flex-end;text-align:right;font-size:9px;color:#333;overflow:hidden;padding-right:4px;box-sizing:border-box;white-space:nowrap;"><span>0</span></div>
<div style="left:0px;top:532px;width:810px;height:8px;background:#ebebeb"></div>
<svg style="left:0px;top:511px" width="16" height="9" viewBox="0 0 16 9"><path d="M8 1.2v5" stroke="#333" stroke-width="1.5" fill="none"/><path d="M5.3 4.4L8 7.3l2.7-2.9z" fill="#333" stroke="#333" stroke-width="0.8" stroke-linejoin="round"/></svg>
<div style="left:-20px;top:518.2px;width:56px;text-align:center;font-size:7px;font-weight:bold;color:#333;line-height:7px;letter-spacing:-0.45px">XLS</div>
<svg style="left:30px;top:511px" width="16" height="9" viewBox="0 0 16 9"><path d="M8 1.2v5" stroke="#333" stroke-width="1.5" fill="none"/><path d="M5.3 4.4L8 7.3l2.7-2.9z" fill="#333" stroke="#333" stroke-width="0.8" stroke-linejoin="round"/></svg>
<div style="left:10px;top:518.2px;width:56px;text-align:center;font-size:7px;font-weight:bold;color:#333;line-height:7px;letter-spacing:-0.45px">PDF</div>
<div style="left:377px;top:509px;width:89px;height:20px;box-sizing:border-box;border:1px solid #d4d4d4;background:#fff"></div>
<div style="left:467px;top:509px;width:90px;height:20px;box-sizing:border-box;border:1px solid #d4d4d4;background:#fff;border-radius:1px"></div>
<div style="left:470px;top:513px;font-size:9px;color:#333;line-height:12px">All</div>
<svg style="left:545px;top:514px" width="8" height="10" viewBox="0 0 8 10"><path d="M4 1L1.5 4h5zM4 9L1.5 6h5z" fill="#444"/></svg>
<svg style="left:558px;top:512px" width="15" height="14" viewBox="0 0 15 14"><circle cx="6" cy="5.8" r="4.3" stroke="#333" stroke-width="1.8" fill="none"/><path d="M9 8.8l3.8 3.6" stroke="#333" stroke-width="2.2" stroke-linecap="round"/></svg>
<div style="left:748px;top:509px;width:54px;height:19px;box-sizing:border-box;border:1px solid #d4d4d4;background:#fff"></div>
<svg style="left:751px;top:512px" width="18" height="14" viewBox="0 0 18 14"><path d="M1.6 2.2h14.2M1.6 6.8h14.2M1.6 11.3h6.8" stroke="#333" stroke-width="2.2" stroke-linecap="round"/></svg>
<div style="left:770px;top:512px;font-size:10px;color:#333;line-height:13px">20</div>
<svg style="left:792px;top:514px" width="7" height="10" viewBox="0 0 7 10"><path d="M3.5 1L1 4h5zM3.5 9L1 6h5z" fill="#444"/></svg>
</body></html>
